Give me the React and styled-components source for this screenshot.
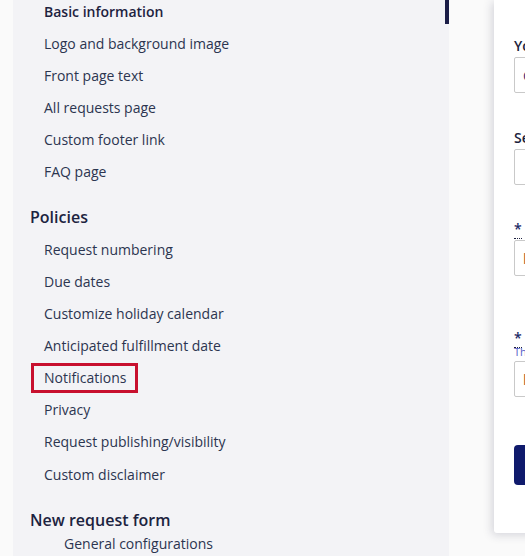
import React from "react";
import styled, { createGlobalStyle } from "styled-components";

const Global = createGlobalStyle`
  html, body { margin: 0; padding: 0; background: #fafafa; overflow: hidden; }
  body { font-family: "Open Sans", "Noto Sans", sans-serif; }
  * { box-sizing: border-box; }
`;

const Page = styled.div`
  display: flex;
  height: 556px;
  overflow: hidden;
  padding-left: 13px;
`;

const Sidebar = styled.nav`
  width: 436px;
  flex: none;
  background: #f3f3f6;
  display: flex;
  flex-direction: column;
  margin-top: -5px;
`;

const Item = styled.div`
  position: relative;
  height: ${(p) => p.$h || 32}px;
  flex: none;
  display: flex;
  align-items: center;
  padding-left: 31px;
  font-size: 14px;
  font-weight: ${(p) => (p.$active ? 600 : 400)};
  color: ${(p) => (p.$active ? "#1d2240" : "#2c3550")};
  white-space: nowrap;
  ${(p) =>
    p.$active &&
    `&::after {
      content: "";
      position: absolute;
      right: 0;
      top: 0;
      bottom: 3px;
      width: 4px;
      background: #1b1d47;
    }`}
`;

const SubItem = styled(Item)`
  height: 24px;
  margin-top: -5px;
  padding-left: 51px;
`;

const Highlight = styled.span`
  display: inline-flex;
  align-items: center;
  height: 30px;
  margin-left: -13px;
  padding: 0 9px 0 10px;
  border: 3px solid #c8102e;
`;

const Heading = styled.div`
  height: 32px;
  flex: none;
  margin-top: ${(p) => p.$gap}px;
  display: flex;
  align-items: center;
  padding-left: 17px;
  font-size: 16px;
  font-weight: 600;
  color: #1c2340;
  white-space: nowrap;
`;

const Main = styled.main`
  flex: 1;
  min-width: 0;
  padding-left: 45px;
  background: #fafafa;
`;

const Card = styled.section`
  width: 600px;
  height: 533px;
  background: #ffffff;
  border-radius: 0 0 3px 3px;
  box-shadow: -2px 2px 10px rgba(40, 40, 70, 0.18);
  padding: 36px 20px 0;
  display: flex;
  flex-direction: column;
`;

const Field = styled.div`
  display: flex;
  flex-direction: column;
  margin-top: ${(p) => p.$gap || 0}px;
`;

const Label = styled.label`
  font-size: 14px;
  font-weight: 600;
  line-height: 20px;
  color: #1c1f3d;
  margin-bottom: 1px;
  white-space: nowrap;
`;

const Req = styled.abbr`
  text-decoration: none;
  border-bottom: 1px dotted #1c1f3d;
  color: #1c2a66;
  margin-right: 4px;
`;

const Help = styled.div`
  font-size: 11px;
  line-height: 14px;
  color: #5660c8;
  margin-top: -4px;
  margin-bottom: 2px;
  white-space: nowrap;
`;

const Input = styled.div`
  height: 36px;
  border: 1px solid #c9c9c9;
  border-radius: 2px;
  padding-left: 8px;
  display: flex;
  align-items: center;
  font-size: 14px;
  color: ${(p) => p.$color || "#2a2f4a"};
  white-space: nowrap;
`;

const Button = styled.button`
  margin-top: 48px;
  width: 160px;
  height: 40px;
  border: none;
  border-radius: 4px;
  background: #0f1a6c;
  color: #fff;
  font-family: inherit;
  font-size: 14px;
  font-weight: 600;
`;

const basic = [
  "Logo and background image",
  "Front page text",
  "All requests page",
  "Custom footer link",
  "FAQ page",
];

const policies = [
  "Request numbering",
  "Due dates",
  "Customize holiday calendar",
  "Anticipated fulfillment date",
  "Notifications",
  "Privacy",
  "Request publishing/visibility",
  "Custom disclaimer",
];

export default function App() {
  return (
    <>
      <Global />
      <Page>
        <Sidebar>
          <Item $active>Basic information</Item>
          {basic.map((t) => (
            <Item key={t}>{t}</Item>
          ))}
          <Heading $gap={14}>Policies</Heading>
          {policies.map((t) =>
            t === "Notifications" ? (
              <Item key={t} $h={32.15}>
                <Highlight>{t}</Highlight>
              </Item>
            ) : (
              <Item key={t} $h={32.15}>
                {t}
              </Item>
            )
          )}
          <Heading $gap={14}>New request form</Heading>
          <SubItem>General configurations</SubItem>
        </Sidebar>
        <Main>
          <Card>
            <Field>
              <Label>Your portal name</Label>
              <Input $color="#3a2f7a">City of Springfield</Input>
            </Field>
            <Field $gap={35}>
              <Label>Search engine description</Label>
              <Input />
            </Field>
            <Field $gap={34}>
              <Label>
                <Req title="required">*</Req>Timezone
              </Label>
              <Input $color="#b0602a">l</Input>
            </Field>
            <Field $gap={52}>
              <Label>
                <Req title="required">*</Req>Contact email
              </Label>
              <Help>The email address shown to requesters</Help>
              <Input $color="#b0602a">l</Input>
            </Field>
            <Button>Save</Button>
          </Card>
        </Main>
      </Page>
    </>
  );
}
